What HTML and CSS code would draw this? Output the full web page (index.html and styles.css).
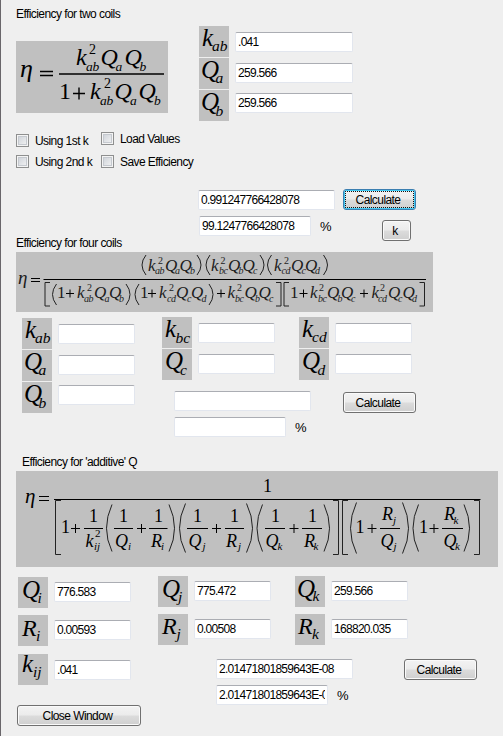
FILE: index.html
```html
<!DOCTYPE html>
<html lang="en">
<head>
<meta charset="utf-8">
<title>Efficiency</title>
<link rel="stylesheet" href="styles.css">
</head>
<body>
<main class="window">
  <section class="two-coils">
    <div class="intro">
      <h2>Efficiency for two coils</h2>
      <svg class="formula f-two" viewBox="16 41 152 72" width="152" height="72">
        <text class="it eta" x="20" y="77">η</text>
        <path class="rule" d="M40 71.5h13M40 75.5h13M59 74h105"/>
        <text class="it" x="76 100.500 124.500" y="65">kQQ</text>
        <text class="sub" x="86 92.5 115.500 139.5" y="71">abab</text>
        <text class="sup" x="89" y="54">2</text>
        <text class="up" x="59" y="99">1</text>
        <path class="rule" d="M73 93.5h12M79 87.5v12"/>
        <text class="it" x="90 114.500 138.500" y="99">kQQ</text>
        <text class="sub" x="100 106.5 130 154" y="105">abab</text>
        <text class="sup" x="104" y="88">2</text>
      </svg>
    </div>
    <div class="group wide top">
      <div class="tiles">
        <svg viewBox="0 0 30 31"><text x="3" y="20">k</text><text class="s" x="13" y="25">ab</text></svg>
        <svg viewBox="0 0 30 31"><text x="2" y="20">Q</text><text class="s" x="16.500" y="25">a</text></svg>
        <svg viewBox="0 0 30 31"><text x="2" y="20">Q</text><text class="s" x="16.500" y="26">b</text></svg>
      </div>
      <div class="inputs"><input value=".041"><input value="259.566"><input value="259.566"></div>
    </div>
  </section>

  <section class="options">
    <div class="col first">
      <label><input type="checkbox"><span>Using 1st k</span></label>
      <label><input type="checkbox"><span>Using 2nd k</span></label>
    </div>
    <div class="col second">
      <label><input type="checkbox"><span>Load Values</span></label>
      <label><input type="checkbox"><span>Save Efficiency</span></label>
    </div>
  </section>

  <section class="outcome">
    <div class="results">
      <input class="full" value="0.991247766428078">
      <div class="percent shifted"><input value="99.1247766428078"><span>%</span></div>
    </div>
    <div class="actions">
      <button class="focused">Calculate</button>
      <button class="small">k</button>
    </div>
  </section>

  <section class="four-coils">
    <h2>Efficiency for four coils</h2>
    <svg class="formula f-four" viewBox="16 252 417 60" width="417" height="60">
      <text class="it eta" x="18" y="284">η</text>
      <path class="rule" d="M31 278.5h9M31 281.5h9M43.5 279.5H426"/>
      <path class="fence" d="M146 255q-8 10 0 20M197 255q8 10 0 20M210 255q-8 10 0 20M260 255q8 10 0 20M271.500 255q-8 10 0 20M323.500 255q8 10 0 20"/>
      <text class="it" x="148 165 179.500 211 228 242.500 274 291 305" y="271">kQQkQQkQQ</text>
      <text class="sub" x="155 159.500 175 190 219 223.500 238.500 253 281.500 285.500 301.500 315" y="274">ababbcbccdcd</text>
      <text class="sup" x="158 220.500 284" y="264">222</text>
      <path class="fence" d="M50 282.500h-5v23.500h5M56.500 284q-8 10.500 0 21M126 284q8 10.500 0 21M139 284q-8 10.500 0 21M209 284q8 10.500 0 21M276 282.500h5v23.500h-5M289 282.500h-5v23.500h5M419.500 282.500h5v23.500h-5"/>
      <text class="up" x="57 140 290" y="298">111</text>
      <path class="rule" d="M66 293.500h8M70 289.500v8M148 293.500h8M152 289.500v8M217 293.500h8M221 289.500v8M299.500 293.500h8M303.500 289.500v8M360 293.500h8M364 289.500v8"/>
      <text class="it" x="77 94 109 159 176 191 227.500 244.500 258.500 310 327 341 371.500 388 402.500" y="298">kQQkQQkQQkQQkQQ</text>
      <text class="sub" x="84 88.500 104.500 119 167 171 187 201.500 235 239.500 255 269 318 322.500 337.500 351 378 382 398 412" y="301.500">ababcdcdbcbcbcbccdcd</text>
      <text class="sup" x="87 169 237 319 380" y="291">22222</text>
    </svg>
    <div class="fields">
      <div class="group lower">
        <div class="tiles">
          <svg viewBox="0 0 30 31"><text x="3" y="20">k</text><text class="s" x="13" y="25">ab</text></svg>
          <svg viewBox="0 0 30 31"><text x="2" y="20">Q</text><text class="s" x="16.500" y="25">a</text></svg>
          <svg viewBox="0 0 30 31"><text x="2" y="20">Q</text><text class="s" x="16.500" y="26">b</text></svg>
        </div>
        <div class="inputs"><input><input><input></div>
      </div>
      <div class="group">
        <div class="tiles">
          <svg viewBox="0 0 30 31"><text x="3" y="20">k</text><text class="s" x="13.500" y="26">bc</text></svg>
          <svg viewBox="0 0 30 31"><text x="3" y="20">Q</text><text class="s" x="18" y="26">c</text></svg>
        </div>
        <div class="inputs"><input><input></div>
      </div>
      <div class="group">
        <div class="tiles">
          <svg viewBox="0 0 30 31"><text x="3" y="20">k</text><text class="s" x="13" y="25">cd</text></svg>
          <svg viewBox="0 0 30 31"><text x="3" y="20">Q</text><text class="s" x="18.500" y="26">d</text></svg>
        </div>
        <div class="inputs"><input><input></div>
      </div>
    </div>
    <div class="outcome">
      <div class="results">
        <input class="full">
        <div class="percent"><input><span>%</span></div>
      </div>
      <div class="actions"><button>Calculate</button></div>
    </div>
  </section>

  <section class="additive">
    <h2>Efficiency for 'additive' Q</h2>
    <svg class="formula f-add" viewBox="16 471 482 96" width="482" height="96">
      <text class="it eta" x="25" y="503">η</text>
      <path class="rule" d="M39 496.500h10M39 500.500h10M54 499.500H480.500"/>
      <text class="up" x="263" y="492">1</text>
      <path class="fence" d="M61 500.500h-5.500v54h5.500M333 500.500h5.500v54h-5.500M348 500.500h-5.500v54h5.500M474 500.500h5.500v54h-5.500"/>
      <path class="fence" d="M112 504.500q-11 24 0 47M169 504.500q11 24 0 47M185.500 503.500q-12 25 0 49M246.500 503.500q12 25 0 49M262.500 504.500q-11 24 0 47M324 504.500q11 24 0 47M356.500 502.500q-12 26 0 51M402.500 502.500q12 26 0 51M418.500 504.500q-11 24 0 47M464 504.500q11 24 0 47"/>
      <path class="rule" d="M84 528.500h19M114 528.500h19M149 528.500h18.500M187 528.500h21M225 528.500h19M265 528.500h20M302 528.500h20M380 528.500h20M442 528.500h21"/>
      <path class="rule" d="M71 528.500h9M75.500 524v9M137 528.500h9M141.500 524v9M212 528.500h9M216.500 524v9M289.500 528.500h9M294 524v9M367.500 528.500h9M372 524v9M429.500 528.500h9M434 524v9"/>
      <text class="up" x="61 355.500 419" y="533">111</text>
      <text class="up" x="89 119 154 193 230 271 308" y="522">1111111</text>
      <text class="it" x="382 444" y="520">RR</text>
      <text class="sub" x="393 453.500" y="523.500">jk</text>
      <text class="it" x="85.500 115 151 188.500 226 265.500 304 380.500 443.500" y="547">kQRQRQRQQ</text>
      <text class="sub" x="94 97 128 161 202.500 238 277.500 313.500 393.500 455" y="550">ijiijjkkjk</text>
      <text class="sup" x="95" y="537">2</text>
    </svg>
    <div class="fields">
      <div class="group lower">
        <div class="tiles">
          <svg viewBox="0 0 30 31"><text x="4" y="21">Q</text><text class="s" x="19.500" y="26">i</text></svg>
          <svg viewBox="0 0 30 31"><text class="r" x="4" y="21">R</text><text class="s" x="18" y="26">i</text></svg>
          <svg class="last" viewBox="0 0 30 31"><text x="4" y="18">k</text><text class="s" x="15" y="23">ij</text></svg>
        </div>
        <div class="inputs"><input value="776.583"><input value="0.00593"><input class="last" value=".041"></div>
      </div>
      <div class="group">
        <div class="tiles">
          <svg viewBox="0 0 30 31"><text x="4" y="21">Q</text><text class="s" x="20" y="26">j</text></svg>
          <svg viewBox="0 0 30 31"><text class="r" x="4" y="20">R</text><text class="s" x="18.500" y="25">j</text></svg>
        </div>
        <div class="inputs"><input value="775.472"><input value="0.00508"></div>
      </div>
      <div class="group">
        <div class="tiles">
          <svg viewBox="0 0 30 31"><text x="2" y="21">Q</text><text class="s" x="17.500" y="25">k</text></svg>
          <svg viewBox="0 0 30 31"><text class="r" x="3" y="20">R</text><text class="s" x="17" y="25">k</text></svg>
        </div>
        <div class="inputs"><input value="259.566"><input value="168820.035"></div>
      </div>
    </div>
    <div class="outcome">
      <button class="close">Close Window</button>
      <div class="results">
        <input class="full" value="2.01471801859643E-08">
        <div class="percent"><input value="2.01471801859643E-08"><span>%</span></div>
      </div>
      <div class="actions"><button>Calculate</button></div>
    </div>
  </section>
</main>
</body>
</html>
```
FILE: styles.css
```css
* { box-sizing: border-box; }

body {
  margin: 0;
  background: #efefef;
  color: #000;
  font: 12px/14px "Liberation Sans", Arial, sans-serif;
  letter-spacing: -0.57px;
}

.window {
  width: 503px;
  height: 736px;
  overflow: hidden;
  border-left: 1px solid #69666a;
  padding: 7px 0 0 15px;
}

h2 { margin: 0; font: inherit; white-space: nowrap; }

input, button {
  font: inherit;
  letter-spacing: inherit;
  color: inherit;
  margin: 0;
}

input {
  display: block;
  flex: none;
  width: 77px;
  height: 20px;
  padding: 0 2px 1px;
  border: 1px solid #e2e6ee;
  border-top-color: #abadb3;
  border-radius: 2px;
  background: #fff;
  letter-spacing: -0.7px;
  outline: none;
}

button {
  display: block;
  width: 73px;
  height: 21px;
  padding: 0 3px 0 0;
  border: 1px solid #707070;
  border-radius: 3px;
  background: linear-gradient(#f3f3f3, #ebebeb 49%, #dcdcdc 51%, #cfcfcf);
  box-shadow: inset 0 0 0 1px #fafafa;
  text-align: center;
}

button.focused {
  border-color: #3c7fb1;
  box-shadow: inset 0 0 0 1px #43c9f2;
  outline: 1px dotted #111;
  outline-offset: -3px;
}

button.small { width: 29px; margin: 10px 0 0 39px; }

/* Formula panels */
.formula { display: block; background: #c0c0c0; letter-spacing: 0; }
.formula text, .tiles text { font-family: "Liberation Serif", "Times New Roman", serif; }
.formula .it, .formula .sub { font-style: italic; }
.rule, .fence { fill: none; stroke: #000; stroke-width: 1; }
.fence { stroke: #222; }

.f-two { margin-top: 20px; }
.f-two .it, .f-two .up { font-size: 24px; }
.f-two .it.eta { font-size: 26px; }
.f-two .sub { font-size: 13.5px; }
.f-two .sup { font-size: 14px; }
.f-two .rule { stroke-width: 1.4; }

.f-four { margin-top: 2px; fill: #1c1c1c; }
.f-four .it { font-size: 17px; }
.f-four .it.eta { font-size: 19px; }
.f-four .up { font-size: 17px; }
.f-four .sub, .f-four .sup { font-size: 10px; }

.f-add { margin-top: 2px; }
.f-add .it { font-size: 18px; }
.f-add .it.eta { font-size: 21px; }
.f-add .up { font-size: 18px; }
.f-add .sub, .f-add .sup { font-size: 11px; }

/* Symbol tiles with their text boxes */
.group { display: flex; align-items: flex-start; gap: 6px; }
.tiles { display: flex; flex-direction: column; gap: 1px; }
.tiles svg {
  display: block;
  flex: none;
  width: 30px;
  height: 31px;
  background: #c0c0c0;
  letter-spacing: 0;
  overflow: visible;
}
.tiles text { font-size: 25px; font-style: italic; }
.tiles text.r { font-size: 24px; }
.tiles text.s { font-size: 15.5px; }
.inputs { display: flex; flex-direction: column; padding-top: 6px; }
.inputs input + input { margin-top: 11px; }
.inputs input + input + input { margin-top: 10px; }
.wide input { width: 118px; }

.two-coils { display: flex; gap: 31px; height: 125px; }
.intro { width: 152px; }
.group.top { margin-top: 19px; }

.options { display: flex; height: 57px; }
.options .col { display: flex; flex-direction: column; width: 85px; }
.options .first { padding-top: 2px; gap: 8px; }
.options .second { gap: 10px; width: 110px; }
label {
  display: flex;
  align-items: center;
  gap: 6px;
  height: 13px;
  white-space: nowrap;
}
input[type="checkbox"] {
  appearance: none;
  width: 13px;
  height: 13px;
  padding: 0;
  border: 1px solid #8e8f8f;
  border-radius: 0;
  background: linear-gradient(135deg, #c9ced5, #f6f6f6);
  box-shadow: inset 0 0 0 1px #f4f4f4, inset 0 0 0 2px #c5c9cf;
}

.outcome { display: flex; height: 47px; }
.results { width: 145px; padding-top: 1px; margin-left: 182px; }
.full { width: 137px; }
.percent { display: flex; align-items: center; gap: 9px; margin-top: 6px; }
.percent input { width: 112px; }
.percent.shifted { margin-left: 1px; }
.percent span { font-size: 13px; padding-top: 2px; }

.four-coils { height: 219px; }
.four-coils .fields { display: flex; gap: 27px; height: 78px; padding: 5px 0 0 6px; }
.four-coils .group + .group + .group { margin-left: -3px; }
.lower { margin-top: 1px; }
.four-coils .outcome .results { margin-left: 158px; width: 169px; }
.four-coils .outcome .actions { padding-top: 2px; }

.additive h2 { padding-left: 6px; }
.additive .fields { display: flex; gap: 27px; height: 92px; padding: 9px 0 0 2px; }
.additive .group + .group + .group { margin-left: -3px; }
.additive .tiles { gap: 7px; }
.additive .inputs { padding-top: 5px; }
.additive .inputs input + input { margin-top: 18px; }
.additive .inputs input.last { margin-top: 20px; }
.additive svg.last { margin-top: 1px; }
.additive .results { margin-left: 75px; width: 188px; padding-top: 0; }
.additive .close { width: 124px; margin: 46px 0 0 1px; flex: none; }
```
